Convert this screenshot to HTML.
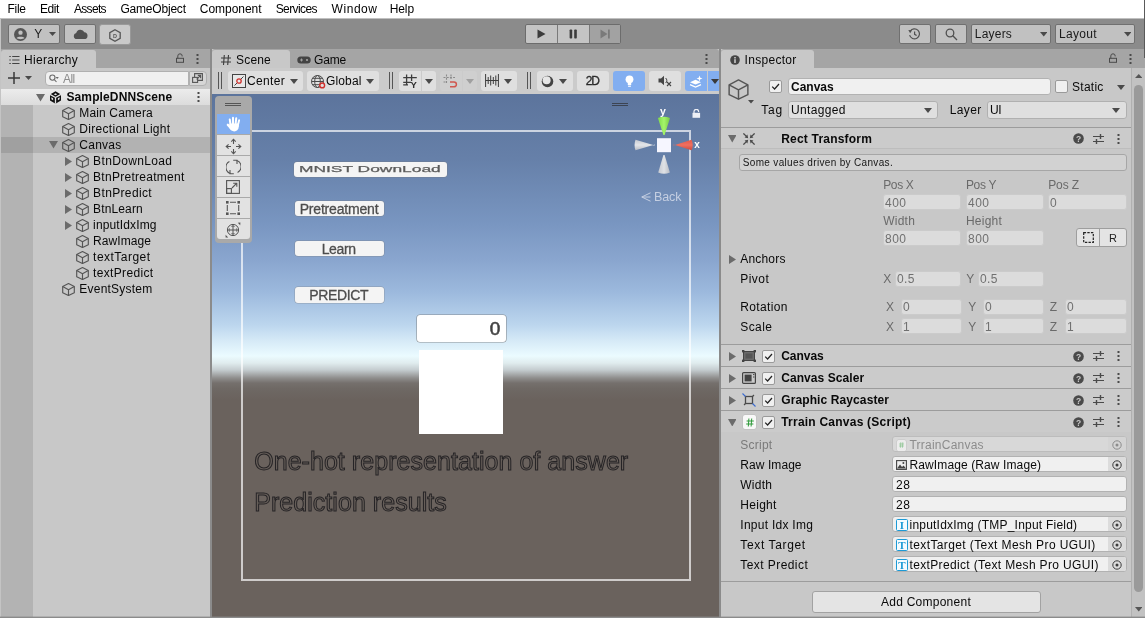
<!DOCTYPE html>
<html><head><meta charset="utf-8"><title>Unity</title>
<style>
*{box-sizing:border-box;margin:0;padding:0}
html,body{width:1145px;height:618px;overflow:hidden;background:#8b8b8b;font-family:"Liberation Sans",sans-serif;font-size:12px;color:#090909}
.b{position:absolute;display:block}
.t{position:absolute;white-space:pre;line-height:16px;height:16px}
</style></head>
<body>
<div class="b" style="left:0;top:0;width:1145px;height:618px;overflow:hidden;will-change:transform">
<div class="b" style="left:0px;top:0px;width:1145px;height:18px;background:#ffffff;"></div>
<span class="t" style="left:7.5px;top:1.0px;font-size:12px;color:#000;letter-spacing:-0.27px;">File</span>
<span class="t" style="left:39.9px;top:1.0px;font-size:12px;color:#000;letter-spacing:-0.37px;">Edit</span>
<span class="t" style="left:74.0px;top:1.0px;font-size:12px;color:#000;letter-spacing:-0.69px;">Assets</span>
<span class="t" style="left:120.5px;top:1.0px;font-size:12px;color:#000;letter-spacing:-0.21px;">GameObject</span>
<span class="t" style="left:199.8px;top:1.0px;font-size:12px;color:#000;letter-spacing:-0.04px;">Component</span>
<span class="t" style="left:275.7px;top:1.0px;font-size:12px;color:#000;letter-spacing:-0.60px;">Services</span>
<span class="t" style="left:331.5px;top:1.0px;font-size:12px;color:#000;letter-spacing:0.57px;">Window</span>
<span class="t" style="left:389.8px;top:1.0px;font-size:12px;color:#000;letter-spacing:-0.14px;">Help</span>
<div class="b" style="left:0px;top:18px;width:1145px;height:31px;background:#8b8b8b;"></div>
<div class="b" style="left:0px;top:18px;width:1145px;height:1px;background:#c0c0c0;"></div>
<div class="b" style="left:8px;top:24px;width:52px;height:20px;background:#c1c1c1;border:1px solid #707070;border-radius:2px;"></div>
<svg class="b" style="left:13.5px;top:27.5px;" width="13" height="13" viewBox="0 0 12 12"><circle cx="6" cy="6" r="6" fill="#555"/><circle cx="6" cy="4.3" r="2" fill="#c1c1c1"/><path d="M2.3 9.3 C3.3 7.6 8.7 7.6 9.7 9.3 C8.6 10.6 3.4 10.6 2.3 9.3 Z" fill="#c1c1c1"/></svg>
<span class="t" style="left:34.3px;top:26.0px;font-size:12px;color:#1a1a1a;letter-spacing:0.58px;">Y</span>
<svg class="b" style="left:48.7px;top:32px;" width="7" height="4" viewBox="0 0 7 4"><path d="M0 0 L7 0 L3.5 4 Z" fill="#4a4a4a"/></svg>
<div class="b" style="left:64px;top:24px;width:32px;height:20px;background:#c1c1c1;border:1px solid #707070;border-radius:2px;"></div>
<svg class="b" style="left:72.5px;top:28.7px;" width="15" height="10.7" viewBox="0 0 14 10"><path d="M3.4 9.6 a3 3 0 0 1 -0.4 -5.9 a4 4 0 0 1 7.6 -0.6 a3.3 3.3 0 0 1 0.4 6.5 Z" fill="#505050"/></svg>
<div class="b" style="left:99px;top:24px;width:32px;height:21px;background:#c9c9c9;border:1px solid #999;border-radius:3px;"></div>
<svg class="b" style="left:109px;top:28.5px;" width="12" height="13" viewBox="0 0 12 13"><path d="M6 0.8 L11.2 3.7 V9.3 L6 12.2 L0.8 9.3 V3.7 Z" fill="none" stroke="#555" stroke-width="1.3"/><text x="6" y="8.6" font-size="5.5" font-family="Liberation Sans, sans-serif" fill="#555" text-anchor="middle" font-weight="bold">D</text></svg>
<div class="b" style="left:525px;top:24px;width:96px;height:20px;background:#c4c4c4;border:1px solid #6c6c6c;border-radius:2px;"></div>
<div class="b" style="left:589.5px;top:25px;width:30.5px;height:18px;background:#a2a2a2;"></div>
<div class="b" style="left:557px;top:25px;width:1px;height:18px;background:#7a7a7a;"></div>
<div class="b" style="left:589px;top:25px;width:1px;height:18px;background:#7a7a7a;"></div>
<svg class="b" style="left:537px;top:29px;" width="9" height="10" viewBox="0 0 9 10"><path d="M0.5 0.5 L8.5 5 L0.5 9.5 Z" fill="#3c3c3c"/></svg>
<svg class="b" style="left:569px;top:29px;" width="9" height="10" viewBox="0 0 9 10"><rect x="0.6" y="0.5" width="2.6" height="9" rx="0.8" fill="#3c3c3c"/><rect x="5.2" y="0.5" width="2.6" height="9" rx="0.8" fill="#3c3c3c"/></svg>
<svg class="b" style="left:600px;top:29px;" width="11" height="10" viewBox="0 0 11 10"><path d="M0.5 0.5 L7.5 5 L0.5 9.5 Z" fill="#7a7a7a"/><rect x="8" y="0.5" width="1.8" height="9" fill="#7a7a7a"/></svg>
<div class="b" style="left:899px;top:24px;width:32px;height:20px;background:#c1c1c1;border:1px solid #707070;border-radius:2px;"></div>
<svg class="b" style="left:908px;top:28px;" width="13" height="12" viewBox="0 0 13 12"><g fill="none" stroke="#505050" stroke-width="1.2"><path d="M2.2 3.2 A5 5 0 1 1 1.6 7.2"/><path d="M6.6 3.4 V6.3 L8.6 7.6"/></g><path d="M0.3 2 L4 2.2 L2.2 5.2 Z" fill="#505050"/></svg>
<div class="b" style="left:935px;top:24px;width:32px;height:20px;background:#c1c1c1;border:1px solid #707070;border-radius:2px;"></div>
<svg class="b" style="left:945px;top:28px;" width="13" height="13" viewBox="0 0 13 13"><g fill="none" stroke="#505050" stroke-width="1.3"><circle cx="5" cy="5" r="3.8"/><path d="M7.8 7.8 L12 12"/></g></svg>
<div class="b" style="left:971px;top:24px;width:80px;height:20px;background:#c1c1c1;border:1px solid #707070;border-radius:2px;"></div>
<span class="t" style="left:974.8px;top:26.0px;font-size:12px;color:#1a1a1a;letter-spacing:0.21px;">Layers</span>
<svg class="b" style="left:1039.5px;top:32px;" width="7.5" height="4.5" viewBox="0 0 7.5 4.5"><path d="M0 0 L7.5 0 L3.75 4.5 Z" fill="#4a4a4a"/></svg>
<div class="b" style="left:1055px;top:24px;width:80px;height:20px;background:#c1c1c1;border:1px solid #707070;border-radius:2px;"></div>
<span class="t" style="left:1059.1px;top:26.0px;font-size:12px;color:#1a1a1a;letter-spacing:0.29px;">Layout</span>
<svg class="b" style="left:1123.5px;top:32px;" width="7.5" height="4.5" viewBox="0 0 7.5 4.5"><path d="M0 0 L7.5 0 L3.75 4.5 Z" fill="#4a4a4a"/></svg>
<div class="b" style="left:1px;top:49px;width:209px;height:568px;background:#c8c8c8;"></div>
<div class="b" style="left:1px;top:49px;width:209px;height:19px;background:#a5a5a5;"></div>
<div class="b" style="left:1px;top:50px;width:95px;height:18px;background:#c8c8c8;border-radius:3px 3px 0 0;"></div>
<svg class="b" style="left:9px;top:55px;" width="11" height="10" viewBox="0 0 11 10"><g stroke="#444" stroke-width="1.1" fill="none"><path d="M3.2 1.5 H10.5 M3.2 5 H10.5 M3.2 8.5 H10.5"/><path d="M0.3 1.5 H1.8 M0.3 5 H1.8 M0.3 8.5 H1.8"/></g></svg>
<span class="t" style="left:24.0px;top:52.0px;font-size:12px;color:#090909;letter-spacing:0.31px;">Hierarchy</span>
<svg class="b" style="left:176px;top:53px;" width="8" height="10" viewBox="0 0 8 10"><g fill="none" stroke="#4a4a4a" stroke-width="1"><rect x="0.5" y="5.3" width="7" height="4"/><path d="M1.8 5.3 V3 a2.2 2.2 0 0 1 4.4 0 V3.4"/></g></svg>
<svg class="b" style="left:196.0px;top:53.5px;" width="3" height="11" viewBox="0 0 3 11"><g fill="#4a4a4a"><rect x="0.5" y="0" width="2" height="2"/><rect x="0.5" y="4" width="2" height="2"/><rect x="0.5" y="8" width="2" height="2"/></g></svg>
<svg class="b" style="left:8px;top:72px;" width="12" height="12" viewBox="0 0 12 12"><path d="M6 0 V12 M0 6 H12" stroke="#3a3a3a" stroke-width="1.5" fill="none"/></svg>
<svg class="b" style="left:25px;top:76px;" width="7" height="4" viewBox="0 0 7 4"><path d="M0 0 L7 0 L3.5 4 Z" fill="#4a4a4a"/></svg>
<div class="b" style="left:45px;top:70.5px;width:144px;height:15.0px;background:#f0f0f0;border:1px solid #b0b0b0;border-radius:4px 0 0 4px;"></div>
<svg class="b" style="left:49px;top:73.5px;" width="10" height="9" viewBox="0 0 10 9"><g fill="none" stroke="#6a6a6a" stroke-width="1.1"><circle cx="3.4" cy="3.6" r="2.6"/><path d="M5.3 5.6 L7.5 8"/></g><path d="M6.6 3 h3.2 l-1.6 2 Z" fill="#6a6a6a"/></svg>
<span class="t" style="left:63.0px;top:70.5px;font-size:12px;color:#8c8c8c;letter-spacing:-0.58px;">All</span>
<div class="b" style="left:188.5px;top:70.5px;width:18.5px;height:15.0px;background:#d6d6d6;border:1px solid #b0b0b0;border-radius:0 4px 4px 0;"></div>
<svg class="b" style="left:192px;top:73px;" width="11" height="10" viewBox="0 0 11 10"><g fill="none" stroke="#555" stroke-width="1.1"><rect x="0.6" y="4.4" width="5" height="5"/><path d="M2.6 4 V0.6 H10.4 V7.4 H6"/><path d="M4.6 6.4 L8.6 2.4 M5.8 2.4 H8.6 V5.2"/></g></svg>
<div class="b" style="left:1px;top:105px;width:32px;height:512px;background:#b3b3b3;"></div>
<div class="b" style="left:1px;top:89px;width:209px;height:16px;background:#e4e4e4;background:linear-gradient(#ececec,#dcdcdc);"></div>
<div class="b" style="left:1px;top:137px;width:209px;height:16px;background:#b2b2b2;"></div>
<div class="b" style="left:1px;top:137px;width:32px;height:16px;background:#a0a0a0;"></div>
<svg class="b" style="left:35.5px;top:94px;" width="9" height="7.5" viewBox="0 0 9 7.5"><path d="M0 0 L9 0 L4.5 7.5 Z" fill="#6b6b6b"/></svg>
<svg class="b" style="left:49px;top:90.5px;" width="13" height="13" viewBox="0 0 13 13"><g fill="#111"><path d="M6.5 0.3 L12 3.4 L12 9.6 L6.5 12.7 L1 9.6 L1 3.4 Z"/></g><g stroke="#e4e4e4" stroke-width="1.3" fill="none"><path d="M6.5 6.5 L6.5 12.7 M6.5 6.5 L1 3.4 M6.5 6.5 L12 3.4"/></g><g fill="#e4e4e4"><path d="M6.5 2.2 L8.2 3.2 L6.5 4.2 L4.8 3.2 Z"/><path d="M2.4 6.3 L4.1 7.3 L4.1 9.3 L2.4 8.3 Z"/><path d="M10.6 6.3 L8.9 7.3 L8.9 9.3 L10.6 8.3 Z"/></g></svg>
<span class="t" style="left:66.4px;top:89.0px;font-size:12px;color:#090909;letter-spacing:0.13px;font-weight:bold;">SampleDNNScene</span>
<svg class="b" style="left:196.5px;top:91.5px;" width="3" height="11" viewBox="0 0 3 11"><g fill="#4a4a4a"><rect x="0.5" y="0" width="2" height="2"/><rect x="0.5" y="4" width="2" height="2"/><rect x="0.5" y="8" width="2" height="2"/></g></svg>
<svg class="b" style="left:62px;top:106.5px;" width="13" height="13" viewBox="0 0 13 13"><g fill="none" stroke="#555555" stroke-width="1.15" stroke-linejoin="round"><path d="M6.5 0.6 L12.3 3.6 L12.3 9.7 L6.5 12.5 L0.7 9.7 L0.7 3.6 Z"/><path d="M0.7 3.6 L6.5 6.7 L12.3 3.6 M6.5 6.7 L6.5 12.5"/></g></svg>
<span class="t" style="left:79.3px;top:105.0px;font-size:12px;color:#090909;letter-spacing:0.14px;">Main Camera</span>
<svg class="b" style="left:62px;top:122.5px;" width="13" height="13" viewBox="0 0 13 13"><g fill="none" stroke="#555555" stroke-width="1.15" stroke-linejoin="round"><path d="M6.5 0.6 L12.3 3.6 L12.3 9.7 L6.5 12.5 L0.7 9.7 L0.7 3.6 Z"/><path d="M0.7 3.6 L6.5 6.7 L12.3 3.6 M6.5 6.7 L6.5 12.5"/></g></svg>
<span class="t" style="left:79.3px;top:121.0px;font-size:12px;color:#090909;letter-spacing:0.30px;">Directional Light</span>
<svg class="b" style="left:49px;top:141px;" width="9" height="7.5" viewBox="0 0 9 7.5"><path d="M0 0 L9 0 L4.5 7.5 Z" fill="#6b6b6b"/></svg>
<svg class="b" style="left:62px;top:138.5px;" width="13" height="13" viewBox="0 0 13 13"><g fill="none" stroke="#555555" stroke-width="1.15" stroke-linejoin="round"><path d="M6.5 0.6 L12.3 3.6 L12.3 9.7 L6.5 12.5 L0.7 9.7 L0.7 3.6 Z"/><path d="M0.7 3.6 L6.5 6.7 L12.3 3.6 M6.5 6.7 L6.5 12.5"/></g></svg>
<span class="t" style="left:79.3px;top:137.0px;font-size:12px;color:#090909;letter-spacing:0.26px;">Canvas</span>
<svg class="b" style="left:64.5px;top:156.5px;" width="7" height="9" viewBox="0 0 7 9"><path d="M0 0 L7 4.5 L0 9 Z" fill="#6b6b6b"/></svg>
<svg class="b" style="left:76px;top:154.5px;" width="13" height="13" viewBox="0 0 13 13"><g fill="none" stroke="#555555" stroke-width="1.15" stroke-linejoin="round"><path d="M6.5 0.6 L12.3 3.6 L12.3 9.7 L6.5 12.5 L0.7 9.7 L0.7 3.6 Z"/><path d="M0.7 3.6 L6.5 6.7 L12.3 3.6 M6.5 6.7 L6.5 12.5"/></g></svg>
<span class="t" style="left:93.1px;top:153.0px;font-size:12px;color:#090909;letter-spacing:0.35px;">BtnDownLoad</span>
<svg class="b" style="left:64.5px;top:172.5px;" width="7" height="9" viewBox="0 0 7 9"><path d="M0 0 L7 4.5 L0 9 Z" fill="#6b6b6b"/></svg>
<svg class="b" style="left:76px;top:170.5px;" width="13" height="13" viewBox="0 0 13 13"><g fill="none" stroke="#555555" stroke-width="1.15" stroke-linejoin="round"><path d="M6.5 0.6 L12.3 3.6 L12.3 9.7 L6.5 12.5 L0.7 9.7 L0.7 3.6 Z"/><path d="M0.7 3.6 L6.5 6.7 L12.3 3.6 M6.5 6.7 L6.5 12.5"/></g></svg>
<span class="t" style="left:93.1px;top:169.0px;font-size:12px;color:#090909;letter-spacing:0.27px;">BtnPretreatment</span>
<svg class="b" style="left:64.5px;top:188.5px;" width="7" height="9" viewBox="0 0 7 9"><path d="M0 0 L7 4.5 L0 9 Z" fill="#6b6b6b"/></svg>
<svg class="b" style="left:76px;top:186.5px;" width="13" height="13" viewBox="0 0 13 13"><g fill="none" stroke="#555555" stroke-width="1.15" stroke-linejoin="round"><path d="M6.5 0.6 L12.3 3.6 L12.3 9.7 L6.5 12.5 L0.7 9.7 L0.7 3.6 Z"/><path d="M0.7 3.6 L6.5 6.7 L12.3 3.6 M6.5 6.7 L6.5 12.5"/></g></svg>
<span class="t" style="left:93.1px;top:185.0px;font-size:12px;color:#090909;letter-spacing:0.35px;">BtnPredict</span>
<svg class="b" style="left:64.5px;top:204.5px;" width="7" height="9" viewBox="0 0 7 9"><path d="M0 0 L7 4.5 L0 9 Z" fill="#6b6b6b"/></svg>
<svg class="b" style="left:76px;top:202.5px;" width="13" height="13" viewBox="0 0 13 13"><g fill="none" stroke="#555555" stroke-width="1.15" stroke-linejoin="round"><path d="M6.5 0.6 L12.3 3.6 L12.3 9.7 L6.5 12.5 L0.7 9.7 L0.7 3.6 Z"/><path d="M0.7 3.6 L6.5 6.7 L12.3 3.6 M6.5 6.7 L6.5 12.5"/></g></svg>
<span class="t" style="left:93.1px;top:201.0px;font-size:12px;color:#090909;letter-spacing:0.13px;">BtnLearn</span>
<svg class="b" style="left:64.5px;top:220.5px;" width="7" height="9" viewBox="0 0 7 9"><path d="M0 0 L7 4.5 L0 9 Z" fill="#6b6b6b"/></svg>
<svg class="b" style="left:76px;top:218.5px;" width="13" height="13" viewBox="0 0 13 13"><g fill="none" stroke="#555555" stroke-width="1.15" stroke-linejoin="round"><path d="M6.5 0.6 L12.3 3.6 L12.3 9.7 L6.5 12.5 L0.7 9.7 L0.7 3.6 Z"/><path d="M0.7 3.6 L6.5 6.7 L12.3 3.6 M6.5 6.7 L6.5 12.5"/></g></svg>
<span class="t" style="left:93.1px;top:217.0px;font-size:12px;color:#090909;letter-spacing:0.13px;">inputIdxImg</span>
<svg class="b" style="left:76px;top:234.5px;" width="13" height="13" viewBox="0 0 13 13"><g fill="none" stroke="#555555" stroke-width="1.15" stroke-linejoin="round"><path d="M6.5 0.6 L12.3 3.6 L12.3 9.7 L6.5 12.5 L0.7 9.7 L0.7 3.6 Z"/><path d="M0.7 3.6 L6.5 6.7 L12.3 3.6 M6.5 6.7 L6.5 12.5"/></g></svg>
<span class="t" style="left:93.1px;top:233.0px;font-size:12px;color:#090909;letter-spacing:0.07px;">RawImage</span>
<svg class="b" style="left:76px;top:250.5px;" width="13" height="13" viewBox="0 0 13 13"><g fill="none" stroke="#555555" stroke-width="1.15" stroke-linejoin="round"><path d="M6.5 0.6 L12.3 3.6 L12.3 9.7 L6.5 12.5 L0.7 9.7 L0.7 3.6 Z"/><path d="M0.7 3.6 L6.5 6.7 L12.3 3.6 M6.5 6.7 L6.5 12.5"/></g></svg>
<span class="t" style="left:93.1px;top:249.0px;font-size:12px;color:#090909;letter-spacing:0.48px;">textTarget</span>
<svg class="b" style="left:76px;top:266.5px;" width="13" height="13" viewBox="0 0 13 13"><g fill="none" stroke="#555555" stroke-width="1.15" stroke-linejoin="round"><path d="M6.5 0.6 L12.3 3.6 L12.3 9.7 L6.5 12.5 L0.7 9.7 L0.7 3.6 Z"/><path d="M0.7 3.6 L6.5 6.7 L12.3 3.6 M6.5 6.7 L6.5 12.5"/></g></svg>
<span class="t" style="left:93.1px;top:265.0px;font-size:12px;color:#090909;letter-spacing:0.33px;">textPredict</span>
<svg class="b" style="left:62px;top:282.5px;" width="13" height="13" viewBox="0 0 13 13"><g fill="none" stroke="#555555" stroke-width="1.15" stroke-linejoin="round"><path d="M6.5 0.6 L12.3 3.6 L12.3 9.7 L6.5 12.5 L0.7 9.7 L0.7 3.6 Z"/><path d="M0.7 3.6 L6.5 6.7 L12.3 3.6 M6.5 6.7 L6.5 12.5"/></g></svg>
<span class="t" style="left:79.3px;top:281.0px;font-size:12px;color:#090909;letter-spacing:0.22px;">EventSystem</span>
<div class="b" style="left:212px;top:49px;width:507px;height:568px;background:#c8c8c8;"></div>
<div class="b" style="left:212px;top:49px;width:507px;height:19px;background:#a5a5a5;border-radius:3px 3px 0 0;"></div>
<div class="b" style="left:212px;top:50px;width:77.5px;height:18px;background:#c8c8c8;border-radius:3px 3px 0 0;"></div>
<svg class="b" style="left:221px;top:54.5px;" width="10" height="10" viewBox="0 0 10 10"><path d="M3.3 0 L2.5 10 M7.5 0 L6.7 10 M0 3 H10 M0 7 H10" stroke="#3c3c3c" stroke-width="1.1" fill="none"/></svg>
<span class="t" style="left:236.1px;top:52.0px;font-size:12px;color:#090909;letter-spacing:0.15px;">Scene</span>
<svg class="b" style="left:297px;top:55.5px;" width="14" height="8" viewBox="0 0 14 8"><rect x="0.3" y="0.5" width="13.4" height="7" rx="3.5" fill="#444"/><circle cx="10" cy="4" r="1.1" fill="#a5a5a5"/><path d="M3 4 H6 M4.5 2.5 V5.5" stroke="#a5a5a5" stroke-width="0.9"/></svg>
<span class="t" style="left:314.0px;top:52.0px;font-size:12px;color:#090909;letter-spacing:-0.14px;">Game</span>
<svg class="b" style="left:705.0px;top:53.5px;" width="3" height="11" viewBox="0 0 3 11"><g fill="#4a4a4a"><rect x="0.5" y="0" width="2" height="2"/><rect x="0.5" y="4" width="2" height="2"/><rect x="0.5" y="8" width="2" height="2"/></g></svg>
<div class="b" style="left:212px;top:68px;width:507px;height:25.5px;background:#cbcbcb;"></div>
<div class="b" style="left:218px;top:72px;width:1px;height:17px;background:#555;"></div>
<div class="b" style="left:221px;top:72px;width:1px;height:17px;background:#555;"></div>
<div class="b" style="left:228px;top:71px;width:74.5px;height:19.5px;background:#dfdfdf;border-radius:3px;"></div>
<svg class="b" style="left:232px;top:74px;" width="14" height="14" viewBox="0 0 14 14"><rect x="0.5" y="0.5" width="13" height="13" fill="#e8e8e8" stroke="#444" stroke-width="1"/><path d="M2.5 11.5 L11.5 2.5" stroke="#444" stroke-width="1"/><circle cx="7" cy="7" r="2.2" fill="#e8e8e8" stroke="#d0302c" stroke-width="1.3"/></svg>
<span class="t" style="left:247.0px;top:73.0px;font-size:12px;color:#090909;letter-spacing:0.36px;">Center</span>
<svg class="b" style="left:289.5px;top:79px;" width="8" height="5" viewBox="0 0 8 5"><path d="M0 0 L8 0 L4.0 5 Z" fill="#4a4a4a"/></svg>
<div class="b" style="left:307px;top:71px;width:72px;height:19.5px;background:#dfdfdf;border-radius:3px;"></div>
<svg class="b" style="left:311px;top:74.5px;" width="15" height="14" viewBox="0 0 15 14"><g fill="none" stroke="#4a4a4a" stroke-width="1"><circle cx="6.5" cy="6.5" r="6"/><ellipse cx="6.5" cy="6.5" rx="2.8" ry="6"/><path d="M0.5 6.5 H12.5 M1.4 3.3 H11.6 M1.4 9.7 H11.6"/></g><circle cx="11.2" cy="10.4" r="2.4" fill="#dfdfdf" stroke="#d0302c" stroke-width="1.4"/></svg>
<span class="t" style="left:326.0px;top:73.0px;font-size:12px;color:#090909;letter-spacing:0.15px;">Global</span>
<svg class="b" style="left:365.5px;top:79px;" width="8" height="5" viewBox="0 0 8 5"><path d="M0 0 L8 0 L4.0 5 Z" fill="#4a4a4a"/></svg>
<div class="b" style="left:389px;top:72px;width:1px;height:17px;background:#555;"></div>
<div class="b" style="left:392px;top:72px;width:1px;height:17px;background:#555;"></div>
<div class="b" style="left:399px;top:71px;width:22px;height:19.5px;background:#dfdfdf;border-radius:3px 0 0 3px;"></div>
<div class="b" style="left:422px;top:71px;width:14px;height:19.5px;background:#dfdfdf;border-radius:0 3px 3px 0;"></div>
<svg class="b" style="left:403px;top:74px;" width="15" height="14" viewBox="0 0 15 14"><path d="M3.6 0.4 V11.6 M8.6 0.4 V7 M0.2 3.6 H13.8 M0.2 8.4 H8 M0.2 10.8 H5" stroke="#3c3c3c" stroke-width="1.3" fill="none"/><text x="10.6" y="13.8" font-size="9.5" font-weight="bold" text-anchor="middle" fill="#2e2e2e" font-family="Liberation Sans, sans-serif">Y</text></svg>
<svg class="b" style="left:425px;top:79px;" width="8" height="5" viewBox="0 0 8 5"><path d="M0 0 L8 0 L4.0 5 Z" fill="#4a4a4a"/></svg>
<div class="b" style="left:440px;top:71px;width:22px;height:19.5px;background:#cfcfcf;border-radius:3px 0 0 3px;"></div>
<div class="b" style="left:462.5px;top:71px;width:14.0px;height:19.5px;background:#cfcfcf;border-radius:0 3px 3px 0;"></div>
<svg class="b" style="left:443px;top:74px;" width="16" height="14" viewBox="0 0 16 14"><path d="M3.5 0.5 V9 M8 0.5 V5 M0.5 3.5 H12 M0.5 8 H4" stroke="#8a8a8a" stroke-width="1.1" stroke-dasharray="2 1.2" fill="none"/><path d="M7 8 H11 a2.4 2.4 0 0 1 0 4.8 H7" stroke="#d0574f" stroke-width="1.5" fill="none"/></svg>
<svg class="b" style="left:465.5px;top:79px;" width="8" height="5" viewBox="0 0 8 5"><path d="M0 0 L8 0 L4.0 5 Z" fill="#a0a0a0"/></svg>
<div class="b" style="left:481px;top:71px;width:36px;height:19.5px;background:#dfdfdf;border-radius:3px;"></div>
<svg class="b" style="left:485px;top:74px;" width="14" height="13" viewBox="0 0 14 13"><path d="M0.6 0 V13 M13.4 0 V13 M3.2 3 V10 M5.7 1.5 V11.5 M8.3 3 V10 M10.8 1.5 V11.5 M0.6 6.5 H13.4" stroke="#3c3c3c" stroke-width="1" fill="none"/></svg>
<svg class="b" style="left:503.5px;top:79px;" width="8" height="5" viewBox="0 0 8 5"><path d="M0 0 L8 0 L4.0 5 Z" fill="#4a4a4a"/></svg>
<div class="b" style="left:526.5px;top:72px;width:1.0px;height:17px;background:#555;"></div>
<div class="b" style="left:529.5px;top:72px;width:1.0px;height:17px;background:#555;"></div>
<div class="b" style="left:537px;top:71px;width:36px;height:19.5px;background:#dfdfdf;border-radius:3px;"></div>
<svg class="b" style="left:541px;top:74.5px;" width="13" height="13" viewBox="0 0 13 13"><circle cx="6.5" cy="6.5" r="5.8" fill="#444"/><circle cx="5.6" cy="5.2" r="4" fill="#e6e6e6"/></svg>
<svg class="b" style="left:558.5px;top:79px;" width="8" height="5" viewBox="0 0 8 5"><path d="M0 0 L8 0 L4.0 5 Z" fill="#4a4a4a"/></svg>
<div class="b" style="left:577px;top:71px;width:32px;height:19.5px;background:#dfdfdf;border-radius:3px;"></div>
<span class="t" style="left:585.8px;top:73.0px;font-size:12px;color:#2a2a2a;letter-spacing:-1.10px;-webkit-text-stroke:0.3px #2a2a2a;">2D</span>
<div class="b" style="left:613px;top:71px;width:32px;height:19.5px;background:#82aef0;border-radius:3px;"></div>
<svg class="b" style="left:624.5px;top:75px;" width="9" height="13" viewBox="0 0 9 13"><circle cx="4.5" cy="4.3" r="3.9" fill="#fff"/><rect x="2.8" y="7.6" width="3.4" height="2.4" fill="#fff"/><rect x="3.1" y="10.6" width="2.8" height="1.2" fill="#fff"/></svg>
<div class="b" style="left:649px;top:71px;width:32px;height:19.5px;background:#dfdfdf;border-radius:3px;"></div>
<svg class="b" style="left:658px;top:75px;" width="15" height="12" viewBox="0 0 15 12"><path d="M0.5 3.5 H3 L6 0.8 V10.2 L3 7.5 H0.5 Z" fill="#444"/><path d="M7.6 3 a3.2 3.2 0 0 1 0 5" stroke="#444" stroke-width="1" fill="none"/><path d="M9 7 L13 11 M13 7 L9 11" stroke="#444" stroke-width="1.1"/></svg>
<div class="b" style="left:685px;top:71px;width:22px;height:19.5px;background:#82aef0;border-radius:3px 0 0 3px;"></div>
<div class="b" style="left:707.5px;top:71px;width:11.5px;height:19.5px;background:#82aef0;"></div>
<svg class="b" style="left:689px;top:74.5px;" width="15" height="13" viewBox="0 0 15 13"><path d="M1 7.2 L6.5 4.8 L12 7.2 L6.5 9.6 Z" fill="#fff"/><path d="M1 9.6 L6.5 12 L12 9.6" stroke="#fff" stroke-width="1.2" fill="none"/><path d="M10.5 0.5 L11.3 2.7 L13.5 3.5 L11.3 4.3 L10.5 6.5 L9.7 4.3 L7.5 3.5 L9.7 2.7 Z" fill="#fff"/></svg>
<svg class="b" style="left:710.5px;top:79px;" width="8" height="5" viewBox="0 0 8 5"><path d="M0 0 L8 0 L4.0 5 Z" fill="#3a3a3a"/></svg>
<div class="b" id="sv" style="left:212px;top:93.5px;width:507px;height:523.0px;background:linear-gradient(to bottom,#5c749c 0px,#6680a9 65px,#7996c1 130px,#8aa6cf 167px,#9cb9dd 198px,#bcd6ee 231px,#d6eaf7 247px,#ebfbff 262px,#e0ecee 269px,#c4cccf 276px,#8f8e8d 284px,#75706d 289px,#6e6864 295px,#6a625d 306px,#6a625d 100%);overflow:hidden">
<div class="b" style="left:28.5px;top:36.30000000000001px;width:450.79999999999995px;height:450.90000000000003px;border:2px solid rgba(255,255,255,0.68);"></div>
<div class="b" style="left:81.5px;top:68.0px;width:153.5px;height:15.0px;background:#f4f4f4;border-radius:3px;box-shadow:0 0 0 0.5px rgba(120,120,120,.5);"></div>
<span class="t" style="left:87.39999999999998px;top:67.80000000000001px;font-size:9.5px;color:#5c5c5c;-webkit-text-stroke:0.25px #5c5c5c;transform-origin:0 50%;transform:scaleX(1.83);letter-spacing:0px">MNIST DownLoad</span>
<div class="b" style="left:83px;top:107.5px;width:88.5px;height:15.0px;background:#f4f4f4;border-radius:3px;box-shadow:0 0 0 0.5px rgba(120,120,120,.5);"></div>
<span class="t" style="left:87.7px;top:107.0px;font-size:14px;color:#4d4d4d;letter-spacing:-0.19px;-webkit-text-stroke:0.3px #4d4d4d;">Pretreatment</span>
<div class="b" style="left:83px;top:147.0px;width:88.5px;height:15.5px;background:#f4f4f4;border-radius:3px;box-shadow:0 0 0 0.5px rgba(120,120,120,.5);"></div>
<span class="t" style="left:109.7px;top:147.0px;font-size:14px;color:#4d4d4d;letter-spacing:-0.36px;-webkit-text-stroke:0.3px #4d4d4d;">Learn</span>
<div class="b" style="left:83px;top:193.5px;width:88.5px;height:15.5px;background:#f4f4f4;border-radius:3px;box-shadow:0 0 0 0.5px rgba(120,120,120,.5);"></div>
<span class="t" style="left:97.3px;top:193.5px;font-size:14px;color:#4d4d4d;letter-spacing:-0.38px;-webkit-text-stroke:0.3px #4d4d4d;">PREDICT</span>
<div class="b" style="left:205px;top:221.0px;width:88.5px;height:27.0px;background:#ffffff;border-radius:3px;box-shadow:0 0 0 0.6px rgba(110,110,110,.7);"></div>
<span class="t" style="left:277.8px;top:227.0px;font-size:19px;color:#404040;letter-spacing:-0.08px;-webkit-text-stroke:0.55px #404040;">0</span>
<div class="b" style="left:207px;top:256.5px;width:84px;height:84.0px;background:#ffffff;"></div>
<span class="t" style="left:42.19999999999999px;top:352.6px;font-size:25px;line-height:30px;height:30px;color:#665e59;-webkit-text-stroke:1px #262426;letter-spacing:0.05px">One-hot representation of answer</span>
<span class="t" style="left:42.19999999999999px;top:393.6px;font-size:25px;line-height:30px;height:30px;color:#665e59;-webkit-text-stroke:1px #262426;letter-spacing:0.05px">Prediction results</span>
<div class="b" style="left:2.5px;top:2.5px;width:37.5px;height:147.0px;background:#a9a9a9;border-radius:4px;"></div>
<div class="b" style="left:13px;top:9.0px;width:16px;height:1.0px;background:#555;"></div>
<div class="b" style="left:13px;top:11.5px;width:16px;height:1.0px;background:#555;"></div>
<div class="b" style="left:5px;top:20.5px;width:32.5px;height:20.0px;background:#82aef0;"></div>
<div class="b" style="left:5px;top:41.5px;width:32.5px;height:20.0px;background:#e2e2e2;"></div>
<div class="b" style="left:5px;top:62.5px;width:32.5px;height:20.0px;background:#e2e2e2;"></div>
<div class="b" style="left:5px;top:83.5px;width:32.5px;height:20.0px;background:#e2e2e2;"></div>
<div class="b" style="left:5px;top:104.5px;width:32.5px;height:20.0px;background:#e2e2e2;"></div>
<div class="b" style="left:5px;top:125.5px;width:32.5px;height:20.0px;background:#e2e2e2;border-radius:0 0 3px 3px;"></div>
<svg class="b" style="left:13.5px;top:22.0px;" width="16" height="16" viewBox="0 0 16 16"><g fill="#fff"><rect x="3.4" y="2.4" width="2" height="8" rx="1" transform="rotate(-8 4.4 8)"/><rect x="6" y="0.8" width="2" height="8.5" rx="1"/><rect x="8.6" y="1.2" width="2" height="8.5" rx="1" transform="rotate(6 9.6 8)"/><rect x="11" y="3.2" width="1.9" height="7.5" rx="0.95" transform="rotate(14 12 9)"/><path d="M3.4 7.4 H12.8 V10.6 C12.8 13.6 10.8 15.4 8.2 15.4 C6 15.4 4.6 14.4 3.6 12.6 Z"/><path d="M4.6 13.4 L0.9 9.4 a1.05 1.05 0 0 1 1.7 -1.3 L5.2 10.4 Z"/></g></svg>
<svg class="b" style="left:13px;top:44.0px;" width="17" height="17" viewBox="0 0 17 17"><g fill="none" stroke="#555" stroke-width="1.1"><path d="M8.5 1.5 V6 M8.5 11 V15.5 M1.5 8.5 H6 M11 8.5 H15.5"/><path d="M6.3 3.6 L8.5 1.2 L10.7 3.6 M6.3 13.4 L8.5 15.8 L10.7 13.4 M3.6 6.3 L1.2 8.5 L3.6 10.7 M13.4 6.3 L15.8 8.5 L13.4 10.7"/></g></svg>
<svg class="b" style="left:14px;top:65.0px;" width="15" height="16" viewBox="0 0 15 16"><g fill="none" stroke="#555" stroke-width="1.1"><path d="M10.6 1.6 A6.4 6.4 0 0 1 11.6 13.4"/><path d="M4.4 14.4 A6.4 6.4 0 0 1 3.4 2.6"/><path d="M7.2 1.2 H11 V5"/><path d="M7.8 14.8 H4 V11"/></g></svg>
<svg class="b" style="left:14px;top:86.5px;" width="14" height="14" viewBox="0 0 14 14"><g fill="none" stroke="#555" stroke-width="1.1"><rect x="0.6" y="0.6" width="12.8" height="12.8"/><rect x="0.6" y="8.6" width="4.8" height="4.8"/><path d="M6 8 L10.8 3.2 M7.2 3.2 H10.8 V6.8"/></g></svg>
<svg class="b" style="left:14px;top:107.0px;" width="14" height="14" viewBox="0 0 14 14"><g fill="#555"><rect x="0" y="0" width="2.6" height="2.6"/><rect x="11.4" y="0" width="2.6" height="2.6"/><rect x="0" y="11.4" width="2.6" height="2.6"/><rect x="11.4" y="11.4" width="2.6" height="2.6"/></g><path d="M4 1.3 H10 M4 12.7 H10 M1.3 4 V10 M12.7 4 V10" stroke="#555" stroke-width="1.1"/></svg>
<svg class="b" style="left:13px;top:128.0px;" width="16" height="16" viewBox="0 0 16 16"><g fill="none" stroke="#555" stroke-width="1"><circle cx="8" cy="8" r="5.6"/><path d="M8 3.6 V12.4 M3.6 8 H12.4"/><path d="M6.6 5 L8 3.4 L9.4 5 M6.6 11 L8 12.6 L9.4 11 M5 6.6 L3.4 8 L5 9.4 M11 6.6 L12.6 8 L11 9.4"/></g><path d="M12.8 0.8 L15.4 0.6 L15.2 3.2 Z M0.6 12.8 L0.6 15.4 L3.2 15.4 Z" fill="#555"/></svg>
<div class="b" style="left:400px;top:9.0px;width:16px;height:1.0px;background:#3c4452;"></div>
<div class="b" style="left:400px;top:11.5px;width:16px;height:1.0px;background:#3c4452;"></div>
<svg class="b" style="left:418px;top:11.5px;" width="75" height="72" viewBox="0 0 75 72"><defs>
<linearGradient id="gg" x1="0" x2="1"><stop offset="0" stop-color="#7fd94a"/><stop offset="0.5" stop-color="#a4f56a"/><stop offset="1" stop-color="#78c846"/></linearGradient>
<linearGradient id="gr" y1="0" y2="1" x1="0" x2="0"><stop offset="0" stop-color="#e0584a"/><stop offset="0.5" stop-color="#f07060"/><stop offset="1" stop-color="#c84a40"/></linearGradient>
<linearGradient id="gw" y1="0" y2="1" x1="0" x2="0"><stop offset="0" stop-color="#c4c8d0"/><stop offset="0.5" stop-color="#e4e6ea"/><stop offset="1" stop-color="#b8bcc4"/></linearGradient>
<linearGradient id="gw2" x1="0" x2="1"><stop offset="0" stop-color="#c4c8d0"/><stop offset="0.5" stop-color="#e0e2e6"/><stop offset="1" stop-color="#b8bcc4"/></linearGradient>
</defs>
<path d="M27.9 13 Q34 10.5 40 13 L34.6 30 L33.4 30 Z" fill="url(#gg)"/>
<path d="M43.4 40.6 L61.5 34.8 Q64 40 61.5 45.2 L43.4 39.4 Z" fill="url(#gr)"/>
<path d="M25 40.6 L5.5 34.8 Q3.6 40 5.5 45.2 L25 39.4 Z" fill="url(#gw)"/>
<path d="M33.4 50 L28.2 67.4 Q34 70 39.9 67.4 L34.6 50 Z" fill="url(#gw2)"/>
<rect x="27" y="33.2" width="14" height="14" fill="#f6f6ff"/>
<text x="30" y="10.2" font-size="10.5" font-weight="bold" font-family="Liberation Sans, sans-serif" fill="#fff">y</text>
<text x="64.2" y="43" font-size="10" font-weight="bold" font-family="Liberation Sans, sans-serif" fill="#fff">x</text>
</svg>
<svg class="b" style="left:480px;top:15.5px;" width="9" height="9" viewBox="0 0 9 9"><rect x="0.5" y="3.8" width="7.6" height="5" fill="#eef0f6"/><path d="M2 4 V2.6 a2.3 2.3 0 0 1 4.6 0 V3" fill="none" stroke="#eef0f6" stroke-width="1.2"/></svg>
<svg class="b" style="left:429px;top:98.0px;" width="10" height="10" viewBox="0 0 10 10"><path d="M9.5 0.8 L0.8 5 L9.5 9.2 M0.8 5 H9.5" fill="none" stroke="#c5cfe2" stroke-width="1"/></svg>
<span class="t" style="left:441.9px;top:95.0px;font-size:12.5px;color:#c5cfe2;letter-spacing:-0.06px;">Back</span>
</div>
<div class="b" style="left:721px;top:49px;width:424px;height:568px;background:#c8c8c8;"></div>
<div class="b" style="left:721px;top:49px;width:424px;height:19px;background:#a5a5a5;border-radius:3px 0 0 0;"></div>
<div class="b" style="left:721px;top:50px;width:93px;height:18px;background:#c8c8c8;border-radius:3px 3px 0 0;"></div>
<svg class="b" style="left:730px;top:54.5px;" width="10" height="10" viewBox="0 0 10 10"><circle cx="5" cy="5" r="4.8" fill="#444"/><rect x="4.2" y="4.2" width="1.6" height="3.8" fill="#c8c8c8"/><rect x="4.2" y="2" width="1.6" height="1.5" fill="#c8c8c8"/></svg>
<span class="t" style="left:744.5px;top:52.0px;font-size:12px;color:#090909;letter-spacing:0.31px;">Inspector</span>
<svg class="b" style="left:1108.5px;top:53px;" width="8" height="10" viewBox="0 0 8 10"><g fill="none" stroke="#4a4a4a" stroke-width="1"><rect x="0.5" y="5.3" width="7" height="4"/><path d="M1.8 5.3 V3 a2.2 2.2 0 0 1 4.4 0 V3.4"/></g></svg>
<svg class="b" style="left:1128.5px;top:53.5px;" width="3" height="11" viewBox="0 0 3 11"><g fill="#4a4a4a"><rect x="0.5" y="0" width="2" height="2"/><rect x="0.5" y="4" width="2" height="2"/><rect x="0.5" y="8" width="2" height="2"/></g></svg>
<div class="b" style="left:1131px;top:68px;width:14px;height:549px;background:#c2c2c2;border-left:1px solid #b0b0b0;"></div>
<div class="b" style="left:1133.5px;top:84.5px;width:9.0px;height:507.5px;background:#9a9a9a;border-radius:4.5px;"></div>
<svg class="b" style="left:1134.5px;top:74px;" width="7.5" height="4" viewBox="0 0 7.5 4"><path d="M0 4 L3.75 0 L7.5 4 Z" fill="#555"/></svg>
<svg class="b" style="left:1134.5px;top:607px;" width="7.5" height="4.5" viewBox="0 0 7.5 4.5"><path d="M0 0 L3.75 4.5 L7.5 0 Z" fill="#555"/></svg>
<svg class="b" style="left:727.5px;top:78.5px;" width="21" height="21" viewBox="0 0 13 13"><g fill="none" stroke="#555" stroke-width="0.9" stroke-linejoin="round"><path d="M6.5 0.6 L12.3 3.6 L12.3 9.7 L6.5 12.5 L0.7 9.7 L0.7 3.6 Z"/><path d="M0.7 3.6 L6.5 6.7 L12.3 3.6 M6.5 6.7 L6.5 12.5"/></g></svg>
<svg class="b" style="left:748px;top:100px;" width="6" height="3.5" viewBox="0 0 6 3.5"><path d="M0 0 L6 0 L3.0 3.5 Z" fill="#4a4a4a"/></svg>
<div class="b" style="left:768.5px;top:79.5px;width:13.0px;height:13.0px;background:#f0f0f0;border:1px solid #9a9a9a;border-radius:2px;"></div>
<svg class="b" style="left:770.5px;top:81.5px;" width="9" height="9" viewBox="0 0 9 9"><path d="M1.2 4.6 L3.6 7 L8 2" fill="none" stroke="#222" stroke-width="1.2"/></svg>
<div class="b" style="left:788px;top:77.5px;width:262.5px;height:17.5px;background:#f0f0f0;border:1px solid #b2b2b2;border-radius:3px;"></div>
<span class="t" style="left:791.0px;top:78.5px;font-size:12px;color:#090909;letter-spacing:-0.00px;font-weight:bold;">Canvas</span>
<div class="b" style="left:1054.5px;top:79.5px;width:13.0px;height:13.0px;background:#f0f0f0;border:1px solid #9a9a9a;border-radius:2px;"></div>
<span class="t" style="left:1072.1px;top:78.5px;font-size:12px;color:#090909;letter-spacing:0.25px;">Static</span>
<svg class="b" style="left:1117px;top:84.5px;" width="8" height="5" viewBox="0 0 8 5"><path d="M0 0 L8 0 L4.0 5 Z" fill="#4a4a4a"/></svg>
<span class="t" style="left:761.2px;top:102.0px;font-size:12px;color:#090909;letter-spacing:0.78px;">Tag</span>
<div class="b" style="left:787.5px;top:101px;width:150.0px;height:17.5px;background:#dfdfdf;border:1px solid #b0b0b0;border-radius:3px;"></div>
<span class="t" style="left:791.0px;top:101.5px;font-size:12px;color:#090909;letter-spacing:0.33px;">Untagged</span>
<svg class="b" style="left:924px;top:108px;" width="8" height="5" viewBox="0 0 8 5"><path d="M0 0 L8 0 L4.0 5 Z" fill="#4a4a4a"/></svg>
<span class="t" style="left:949.7px;top:102.0px;font-size:12px;color:#090909;letter-spacing:0.37px;">Layer</span>
<div class="b" style="left:986.5px;top:101px;width:140.0px;height:17.5px;background:#dfdfdf;border:1px solid #b0b0b0;border-radius:3px;"></div>
<span class="t" style="left:990.1px;top:101.5px;font-size:12px;color:#090909;letter-spacing:-0.40px;">UI</span>
<svg class="b" style="left:1111.5px;top:108px;" width="8" height="5" viewBox="0 0 8 5"><path d="M0 0 L8 0 L4.0 5 Z" fill="#4a4a4a"/></svg>
<div class="b" style="left:721px;top:127px;width:410px;height:1px;background:#9c9c9c;"></div>
<div class="b" style="left:721px;top:128px;width:410px;height:20px;background:#cbcbcb;"></div>
<svg class="b" style="left:727.5px;top:135.0px;" width="8.5" height="7.5" viewBox="0 0 8.5 7.5"><path d="M0 0 L8.5 0 L4.25 7.5 Z" fill="#6b6b6b"/></svg>
<svg class="b" style="left:743px;top:132.5px;" width="12" height="12" viewBox="0 0 12 12"><g fill="#4a4a4a"><path d="M5.2 5.2 L1.6 4.4 L4.4 1.6 Z M6.8 5.2 L10.4 4.4 L7.6 1.6 Z M5.2 6.8 L1.6 7.6 L4.4 10.4 Z M6.8 6.8 L10.4 7.6 L7.6 10.4 Z"/></g><path d="M0.4 0.4 L3.4 3.4 M11.6 0.4 L8.6 3.4 M0.4 11.6 L3.4 8.6 M11.6 11.6 L8.6 8.6" stroke="#4a4a4a" stroke-width="1.3"/></svg>
<span class="t" style="left:781.2px;top:130.5px;font-size:12px;color:#090909;letter-spacing:0.20px;font-weight:bold;">Rect Transform</span>
<svg class="b" style="left:1073px;top:133.0px;" width="11" height="11" viewBox="0 0 11 11"><circle cx="5.5" cy="5.5" r="5.3" fill="#4a4a4a"/><text x="5.5" y="8.6" font-size="8.5" font-weight="bold" text-anchor="middle" fill="#c8c8c8" font-family="Liberation Sans, sans-serif">?</text></svg>
<svg class="b" style="left:1093px;top:133.5px;" width="11" height="10" viewBox="0 0 11 10"><path d="M0 2.5 H11 M0 7.5 H11" stroke="#4a4a4a" stroke-width="1.1"/><path d="M7.5 0 V5 M3.5 5 V10" stroke="#4a4a4a" stroke-width="1.4"/></svg>
<svg class="b" style="left:1116.5px;top:133.5px;" width="3" height="11" viewBox="0 0 3 11"><g fill="#4a4a4a"><rect x="0.5" y="0" width="2" height="2"/><rect x="0.5" y="4" width="2" height="2"/><rect x="0.5" y="8" width="2" height="2"/></g></svg>
<div class="b" style="left:721px;top:148px;width:410px;height:1px;background:#bdbdbd;"></div>
<div class="b" style="left:739px;top:153.5px;width:387.5px;height:17.0px;background:#d2d2d2;border:1px solid #a6a6a6;border-radius:3px;"></div>
<span class="t" style="left:742.8px;top:154.8px;font-size:10px;color:#161616;letter-spacing:0.33px;">Some values driven by Canvas.</span>
<span class="t" style="left:883.2px;top:177.0px;font-size:12px;color:#6a6a6a;letter-spacing:-0.34px;">Pos X</span>
<span class="t" style="left:965.9px;top:177.0px;font-size:12px;color:#6a6a6a;letter-spacing:-0.27px;">Pos Y</span>
<span class="t" style="left:1048.2px;top:177.0px;font-size:12px;color:#6a6a6a;letter-spacing:-0.12px;">Pos Z</span>
<div class="b" style="left:882.5px;top:194px;width:78.5px;height:16px;background:#dcdcdc;border:1px solid #cbcbcb;border-radius:3px;"></div>
<span class="t" style="left:885.0px;top:194.5px;font-size:12px;color:#707070;letter-spacing:0.48px;">400</span>
<div class="b" style="left:965.5px;top:194px;width:78.5px;height:16px;background:#dcdcdc;border:1px solid #cbcbcb;border-radius:3px;"></div>
<span class="t" style="left:968.0px;top:194.5px;font-size:12px;color:#707070;letter-spacing:0.48px;">400</span>
<div class="b" style="left:1047.5px;top:194px;width:79.0px;height:16px;background:#dcdcdc;border:1px solid #cbcbcb;border-radius:3px;"></div>
<span class="t" style="left:1050.0px;top:194.5px;font-size:12px;color:#707070;letter-spacing:0.40px;">0</span>
<span class="t" style="left:883.2px;top:213.0px;font-size:12px;color:#6a6a6a;letter-spacing:0.25px;">Width</span>
<span class="t" style="left:965.9px;top:213.0px;font-size:12px;color:#6a6a6a;letter-spacing:0.26px;">Height</span>
<div class="b" style="left:882.5px;top:230px;width:78.5px;height:16px;background:#dcdcdc;border:1px solid #cbcbcb;border-radius:3px;"></div>
<span class="t" style="left:885.0px;top:230.5px;font-size:12px;color:#707070;letter-spacing:0.48px;">800</span>
<div class="b" style="left:965.5px;top:230px;width:78.5px;height:16px;background:#dcdcdc;border:1px solid #cbcbcb;border-radius:3px;"></div>
<span class="t" style="left:968.0px;top:230.5px;font-size:12px;color:#707070;letter-spacing:0.48px;">800</span>
<div class="b" style="left:1076px;top:227.5px;width:50.5px;height:19.0px;background:#e4e4e4;border:1px solid #9e9e9e;border-radius:3px;"></div>
<div class="b" style="left:1099px;top:228.5px;width:1px;height:17.0px;background:#9e9e9e;"></div>
<svg class="b" style="left:1082.5px;top:231.5px;" width="11" height="11" viewBox="0 0 11 11"><rect x="0.7" y="0.7" width="9.6" height="9.6" fill="none" stroke="#222" stroke-width="1.2" stroke-dasharray="2.4 1.2"/></svg>
<span class="t" style="left:1109.0px;top:229.5px;font-size:11px;color:#222;letter-spacing:-0.95px;">R</span>
<svg class="b" style="left:729px;top:254.5px;" width="7" height="9" viewBox="0 0 7 9"><path d="M0 0 L7 4.5 L0 9 Z" fill="#6b6b6b"/></svg>
<span class="t" style="left:740.3px;top:251.0px;font-size:12px;color:#090909;letter-spacing:0.18px;">Anchors</span>
<span class="t" style="left:740.3px;top:271.0px;font-size:12px;color:#090909;letter-spacing:0.45px;">Pivot</span>
<span class="t" style="left:883.2px;top:271.0px;font-size:12px;color:#6a6a6a;letter-spacing:-1.22px;">X</span>
<div class="b" style="left:894.5px;top:270.5px;width:66.5px;height:16.0px;background:#dcdcdc;border:1px solid #cbcbcb;border-radius:3px;"></div>
<span class="t" style="left:897.0px;top:271.0px;font-size:12px;color:#707070;letter-spacing:0.40px;">0.5</span>
<span class="t" style="left:966.2px;top:271.0px;font-size:12px;color:#6a6a6a;letter-spacing:-1.72px;">Y</span>
<div class="b" style="left:977.5px;top:270.5px;width:66.5px;height:16.0px;background:#dcdcdc;border:1px solid #cbcbcb;border-radius:3px;"></div>
<span class="t" style="left:980.0px;top:271.0px;font-size:12px;color:#707070;letter-spacing:0.40px;">0.5</span>
<span class="t" style="left:740.3px;top:299.0px;font-size:12px;color:#090909;letter-spacing:0.36px;">Rotation</span>
<span class="t" style="left:885.9px;top:299.0px;font-size:12px;color:#6a6a6a;letter-spacing:-1.22px;">X</span>
<div class="b" style="left:900.5px;top:298.5px;width:61.5px;height:16.0px;background:#dcdcdc;border:1px solid #cbcbcb;border-radius:3px;"></div>
<span class="t" style="left:903.0px;top:299.0px;font-size:12px;color:#707070;letter-spacing:0.40px;">0</span>
<span class="t" style="left:968.2px;top:299.0px;font-size:12px;color:#6a6a6a;letter-spacing:-1.72px;">Y</span>
<div class="b" style="left:982.5px;top:298.5px;width:61.5px;height:16.0px;background:#dcdcdc;border:1px solid #cbcbcb;border-radius:3px;"></div>
<span class="t" style="left:985.0px;top:299.0px;font-size:12px;color:#707070;letter-spacing:0.40px;">0</span>
<span class="t" style="left:1049.7px;top:299.0px;font-size:12px;color:#6a6a6a;letter-spacing:-0.14px;">Z</span>
<div class="b" style="left:1064.5px;top:298.5px;width:62.0px;height:16.0px;background:#dcdcdc;border:1px solid #cbcbcb;border-radius:3px;"></div>
<span class="t" style="left:1067.0px;top:299.0px;font-size:12px;color:#707070;letter-spacing:0.40px;">0</span>
<span class="t" style="left:740.3px;top:318.5px;font-size:12px;color:#090909;letter-spacing:0.40px;">Scale</span>
<span class="t" style="left:885.9px;top:318.5px;font-size:12px;color:#6a6a6a;letter-spacing:-1.22px;">X</span>
<div class="b" style="left:900.5px;top:318.0px;width:61.5px;height:16.0px;background:#dcdcdc;border:1px solid #cbcbcb;border-radius:3px;"></div>
<span class="t" style="left:903.0px;top:318.5px;font-size:12px;color:#707070;letter-spacing:0.40px;">1</span>
<span class="t" style="left:968.2px;top:318.5px;font-size:12px;color:#6a6a6a;letter-spacing:-1.72px;">Y</span>
<div class="b" style="left:982.5px;top:318.0px;width:61.5px;height:16.0px;background:#dcdcdc;border:1px solid #cbcbcb;border-radius:3px;"></div>
<span class="t" style="left:985.0px;top:318.5px;font-size:12px;color:#707070;letter-spacing:0.40px;">1</span>
<span class="t" style="left:1049.7px;top:318.5px;font-size:12px;color:#6a6a6a;letter-spacing:-0.14px;">Z</span>
<div class="b" style="left:1064.5px;top:318.0px;width:62.0px;height:16.0px;background:#dcdcdc;border:1px solid #cbcbcb;border-radius:3px;"></div>
<span class="t" style="left:1067.0px;top:318.5px;font-size:12px;color:#707070;letter-spacing:0.40px;">1</span>
<div class="b" style="left:721px;top:344px;width:410px;height:1px;background:#9c9c9c;"></div>
<div class="b" style="left:721px;top:345px;width:410px;height:21px;background:#cbcbcb;"></div>
<svg class="b" style="left:728.7px;top:351.5px;" width="7" height="9" viewBox="0 0 7 9"><path d="M0 0 L7 4.5 L0 9 Z" fill="#6b6b6b"/></svg>
<svg class="b" style="left:742px;top:349.0px;" width="14" height="14" viewBox="0 0 14 14"><rect x="1.5" y="2.5" width="11" height="9" fill="#6a6a6a" stroke="#444" stroke-width="1"/><rect x="3.5" y="4.5" width="7" height="5" fill="#555"/><g fill="#444"><rect x="0" y="1" width="2.4" height="2.4"/><rect x="11.6" y="1" width="2.4" height="2.4"/><rect x="0" y="10.6" width="2.4" height="2.4"/><rect x="11.6" y="10.6" width="2.4" height="2.4"/></g></svg>
<div class="b" style="left:761.5px;top:349.5px;width:13.0px;height:13.0px;background:#f0f0f0;border:1px solid #9a9a9a;border-radius:2px;"></div>
<svg class="b" style="left:763.5px;top:351.5px;" width="9" height="9" viewBox="0 0 9 9"><path d="M1.2 4.6 L3.6 7 L8 2" fill="none" stroke="#222" stroke-width="1.2"/></svg>
<span class="t" style="left:781.2px;top:348.0px;font-size:12px;color:#090909;letter-spacing:-0.02px;font-weight:bold;">Canvas</span>
<svg class="b" style="left:1073px;top:350.5px;" width="11" height="11" viewBox="0 0 11 11"><circle cx="5.5" cy="5.5" r="5.3" fill="#4a4a4a"/><text x="5.5" y="8.6" font-size="8.5" font-weight="bold" text-anchor="middle" fill="#c8c8c8" font-family="Liberation Sans, sans-serif">?</text></svg>
<svg class="b" style="left:1093px;top:351.0px;" width="11" height="10" viewBox="0 0 11 10"><path d="M0 2.5 H11 M0 7.5 H11" stroke="#4a4a4a" stroke-width="1.1"/><path d="M7.5 0 V5 M3.5 5 V10" stroke="#4a4a4a" stroke-width="1.4"/></svg>
<svg class="b" style="left:1116.5px;top:351.0px;" width="3" height="11" viewBox="0 0 3 11"><g fill="#4a4a4a"><rect x="0.5" y="0" width="2" height="2"/><rect x="0.5" y="4" width="2" height="2"/><rect x="0.5" y="8" width="2" height="2"/></g></svg>
<div class="b" style="left:721px;top:366px;width:410px;height:1px;background:#9c9c9c;"></div>
<div class="b" style="left:721px;top:367px;width:410px;height:21px;background:#cbcbcb;"></div>
<svg class="b" style="left:728.7px;top:373.5px;" width="7" height="9" viewBox="0 0 7 9"><path d="M0 0 L7 4.5 L0 9 Z" fill="#6b6b6b"/></svg>
<svg class="b" style="left:742px;top:371.0px;" width="14" height="14" viewBox="0 0 14 14"><rect x="0.6" y="1.6" width="12.8" height="10.8" rx="1" fill="none" stroke="#444" stroke-width="1.2"/><rect x="2.6" y="3.6" width="7" height="6.8" fill="#444"/><path d="M11 3.6 h1.4 M11 6 h1.4" stroke="#444" stroke-width="1"/></svg>
<div class="b" style="left:761.5px;top:371.5px;width:13.0px;height:13.0px;background:#f0f0f0;border:1px solid #9a9a9a;border-radius:2px;"></div>
<svg class="b" style="left:763.5px;top:373.5px;" width="9" height="9" viewBox="0 0 9 9"><path d="M1.2 4.6 L3.6 7 L8 2" fill="none" stroke="#222" stroke-width="1.2"/></svg>
<span class="t" style="left:781.2px;top:370.0px;font-size:12px;color:#090909;letter-spacing:0.07px;font-weight:bold;">Canvas Scaler</span>
<svg class="b" style="left:1073px;top:372.5px;" width="11" height="11" viewBox="0 0 11 11"><circle cx="5.5" cy="5.5" r="5.3" fill="#4a4a4a"/><text x="5.5" y="8.6" font-size="8.5" font-weight="bold" text-anchor="middle" fill="#c8c8c8" font-family="Liberation Sans, sans-serif">?</text></svg>
<svg class="b" style="left:1093px;top:373.0px;" width="11" height="10" viewBox="0 0 11 10"><path d="M0 2.5 H11 M0 7.5 H11" stroke="#4a4a4a" stroke-width="1.1"/><path d="M7.5 0 V5 M3.5 5 V10" stroke="#4a4a4a" stroke-width="1.4"/></svg>
<svg class="b" style="left:1116.5px;top:373.0px;" width="3" height="11" viewBox="0 0 3 11"><g fill="#4a4a4a"><rect x="0.5" y="0" width="2" height="2"/><rect x="0.5" y="4" width="2" height="2"/><rect x="0.5" y="8" width="2" height="2"/></g></svg>
<div class="b" style="left:721px;top:388px;width:410px;height:1px;background:#9c9c9c;"></div>
<div class="b" style="left:721px;top:389px;width:410px;height:21px;background:#cbcbcb;"></div>
<svg class="b" style="left:728.7px;top:395.5px;" width="7" height="9" viewBox="0 0 7 9"><path d="M0 0 L7 4.5 L0 9 Z" fill="#6b6b6b"/></svg>
<svg class="b" style="left:742px;top:393.0px;" width="14" height="14" viewBox="0 0 14 14"><rect x="3.5" y="3.5" width="7" height="7" fill="none" stroke="#4a4a4a" stroke-width="1.3"/><path d="M0.5 0.5 L3.5 3.5 M10.5 10.5 L13.5 13.5" stroke="#3a6ad0" stroke-width="1.1"/><path d="M3.5 10.5 L2 12 M10.5 3.5 L12 2" stroke="#4a4a4a" stroke-width="1.1"/></svg>
<div class="b" style="left:761.5px;top:393.5px;width:13.0px;height:13.0px;background:#f0f0f0;border:1px solid #9a9a9a;border-radius:2px;"></div>
<svg class="b" style="left:763.5px;top:395.5px;" width="9" height="9" viewBox="0 0 9 9"><path d="M1.2 4.6 L3.6 7 L8 2" fill="none" stroke="#222" stroke-width="1.2"/></svg>
<span class="t" style="left:781.2px;top:392.0px;font-size:12px;color:#090909;letter-spacing:0.11px;font-weight:bold;">Graphic Raycaster</span>
<svg class="b" style="left:1073px;top:394.5px;" width="11" height="11" viewBox="0 0 11 11"><circle cx="5.5" cy="5.5" r="5.3" fill="#4a4a4a"/><text x="5.5" y="8.6" font-size="8.5" font-weight="bold" text-anchor="middle" fill="#c8c8c8" font-family="Liberation Sans, sans-serif">?</text></svg>
<svg class="b" style="left:1093px;top:395.0px;" width="11" height="10" viewBox="0 0 11 10"><path d="M0 2.5 H11 M0 7.5 H11" stroke="#4a4a4a" stroke-width="1.1"/><path d="M7.5 0 V5 M3.5 5 V10" stroke="#4a4a4a" stroke-width="1.4"/></svg>
<svg class="b" style="left:1116.5px;top:395.0px;" width="3" height="11" viewBox="0 0 3 11"><g fill="#4a4a4a"><rect x="0.5" y="0" width="2" height="2"/><rect x="0.5" y="4" width="2" height="2"/><rect x="0.5" y="8" width="2" height="2"/></g></svg>
<div class="b" style="left:721px;top:410px;width:410px;height:1px;background:#9c9c9c;"></div>
<div class="b" style="left:721px;top:411px;width:410px;height:21px;background:#cbcbcb;"></div>
<svg class="b" style="left:727.5px;top:418.5px;" width="8.5" height="7.5" viewBox="0 0 8.5 7.5"><path d="M0 0 L8.5 0 L4.25 7.5 Z" fill="#6b6b6b"/></svg>
<div class="b" style="left:743px;top:415.0px;width:12.5px;height:14.0px;background:#f8f8f8;border-radius:2px;box-shadow:0 0 0 0.5px #bbb;"></div>
<svg class="b" style="left:745.5px;top:417.5px;" width="8" height="9" viewBox="0 0 8 9"><path d="M2.9 0.5 L2.3 8.5 M5.7 0.5 L5.1 8.5 M0.6 3 H7.8 M0.2 6 H7.4" stroke="#2f9a3a" stroke-width="1" fill="none"/></svg>
<div class="b" style="left:761.5px;top:415.5px;width:13.0px;height:13.0px;background:#f0f0f0;border:1px solid #9a9a9a;border-radius:2px;"></div>
<svg class="b" style="left:763.5px;top:417.5px;" width="9" height="9" viewBox="0 0 9 9"><path d="M1.2 4.6 L3.6 7 L8 2" fill="none" stroke="#222" stroke-width="1.2"/></svg>
<span class="t" style="left:781.2px;top:414.0px;font-size:12px;color:#090909;letter-spacing:0.23px;font-weight:bold;">Trrain Canvas (Script)</span>
<svg class="b" style="left:1073px;top:416.5px;" width="11" height="11" viewBox="0 0 11 11"><circle cx="5.5" cy="5.5" r="5.3" fill="#4a4a4a"/><text x="5.5" y="8.6" font-size="8.5" font-weight="bold" text-anchor="middle" fill="#c8c8c8" font-family="Liberation Sans, sans-serif">?</text></svg>
<svg class="b" style="left:1093px;top:417.0px;" width="11" height="10" viewBox="0 0 11 10"><path d="M0 2.5 H11 M0 7.5 H11" stroke="#4a4a4a" stroke-width="1.1"/><path d="M7.5 0 V5 M3.5 5 V10" stroke="#4a4a4a" stroke-width="1.4"/></svg>
<svg class="b" style="left:1116.5px;top:417.0px;" width="3" height="11" viewBox="0 0 3 11"><g fill="#4a4a4a"><rect x="0.5" y="0" width="2" height="2"/><rect x="0.5" y="4" width="2" height="2"/><rect x="0.5" y="8" width="2" height="2"/></g></svg>
<span class="t" style="left:740.3px;top:437.1px;font-size:12px;color:#7a7a7a;letter-spacing:0.24px;">Script</span>
<div class="b" style="left:892px;top:435.5px;width:234.5px;height:16.5px;background:#d8d8d8;border:1px solid #bcbcbc;border-radius:3px;"></div>
<div class="b" style="left:896.5px;top:439.6px;width:9.0px;height:11.0px;background:#ececec;border-radius:1.5px;box-shadow:0 0 0 0.5px #c4c4c4;"></div>
<svg class="b" style="left:898.5px;top:442.1px;" width="5" height="6" viewBox="0 0 5 6"><path d="M1.8 0.3 L1.4 5.7 M3.8 0.3 L3.4 5.7 M0.2 2 H4.8 M0.1 4 H4.7" stroke="#8fc596" stroke-width="0.8" fill="none"/></svg>
<span class="t" style="left:909.5px;top:437.1px;font-size:12px;color:#8c8c8c;letter-spacing:0.23px;">TrrainCanvas</span>
<div class="b" style="left:1108px;top:437px;width:17.5px;height:14px;background:#d4d4d4;border-radius:0 2px 2px 0;"></div>
<svg class="b" style="left:1112px;top:439.5px;" width="10" height="10" viewBox="0 0 10 10"><circle cx="5" cy="5" r="4.2" fill="none" stroke="#8c8c8c" stroke-width="1"/><circle cx="5" cy="5" r="1.5" fill="#8c8c8c"/></svg>
<span class="t" style="left:740.3px;top:457.1px;font-size:12px;color:#090909;letter-spacing:0.07px;">Raw Image</span>
<div class="b" style="left:892px;top:455.5px;width:234.5px;height:16.5px;background:#f0f0f0;border:1px solid #b2b2b2;border-radius:3px;"></div>
<svg class="b" style="left:895.5px;top:460.1px;" width="11" height="10" viewBox="0 0 11 10"><rect x="0.6" y="0.6" width="9.8" height="8.8" fill="none" stroke="#444" stroke-width="1.1"/><path d="M1 8.6 L4 4.6 L6 7 L7.6 5.6 L10 8.6 Z" fill="#444"/><circle cx="7.4" cy="3" r="1" fill="#444"/></svg>
<span class="t" style="left:909.5px;top:457.1px;font-size:12px;color:#090909;letter-spacing:0.11px;">RawImage (Raw Image)</span>
<div class="b" style="left:1108px;top:457px;width:17.5px;height:14px;background:#dcdcdc;border-radius:0 2px 2px 0;"></div>
<svg class="b" style="left:1112px;top:459.5px;" width="10" height="10" viewBox="0 0 10 10"><circle cx="5" cy="5" r="4.2" fill="none" stroke="#3c3c3c" stroke-width="1"/><circle cx="5" cy="5" r="1.5" fill="#3c3c3c"/></svg>
<span class="t" style="left:740.3px;top:477.1px;font-size:12px;color:#090909;letter-spacing:0.23px;">Width</span>
<div class="b" style="left:892px;top:475.5px;width:234.5px;height:16.5px;background:#f0f0f0;border:1px solid #b2b2b2;border-radius:3px;"></div>
<span class="t" style="left:896.0px;top:477.1px;font-size:12px;color:#090909;letter-spacing:0.53px;">28</span>
<span class="t" style="left:740.3px;top:497.1px;font-size:12px;color:#090909;letter-spacing:0.28px;">Height</span>
<div class="b" style="left:892px;top:495.5px;width:234.5px;height:16.5px;background:#f0f0f0;border:1px solid #b2b2b2;border-radius:3px;"></div>
<span class="t" style="left:896.0px;top:497.1px;font-size:12px;color:#090909;letter-spacing:0.53px;">28</span>
<span class="t" style="left:740.3px;top:517.1px;font-size:12px;color:#090909;letter-spacing:0.27px;">Input Idx Img</span>
<div class="b" style="left:892px;top:515.5px;width:234.5px;height:16.5px;background:#f0f0f0;border:1px solid #b2b2b2;border-radius:3px;"></div>
<div class="b" style="left:895.5px;top:519.1px;width:12.0px;height:12.0px;background:#f4fbff;border:1px solid #1c9ad6;border-radius:1.5px;"></div>
<svg class="b" style="left:895.5px;top:519.1px;" width="12" height="12" viewBox="0 0 12 12"><text x="6" y="10" font-size="11" font-weight="bold" text-anchor="middle" fill="#1c9ad6" font-family="Liberation Serif, serif">I</text></svg>
<span class="t" style="left:909.5px;top:517.1px;font-size:12px;color:#090909;letter-spacing:0.22px;">inputIdxImg (TMP_Input Field)</span>
<div class="b" style="left:1108px;top:517px;width:17.5px;height:14px;background:#dcdcdc;border-radius:0 2px 2px 0;"></div>
<svg class="b" style="left:1112px;top:519.5px;" width="10" height="10" viewBox="0 0 10 10"><circle cx="5" cy="5" r="4.2" fill="none" stroke="#3c3c3c" stroke-width="1"/><circle cx="5" cy="5" r="1.5" fill="#3c3c3c"/></svg>
<span class="t" style="left:740.3px;top:537.1px;font-size:12px;color:#090909;letter-spacing:0.64px;">Text Target</span>
<div class="b" style="left:892px;top:535.5px;width:234.5px;height:16.5px;background:#f0f0f0;border:1px solid #b2b2b2;border-radius:3px;"></div>
<div class="b" style="left:895.5px;top:539.1px;width:12.0px;height:12.0px;background:#f4fbff;border:1px solid #1c9ad6;border-radius:1.5px;"></div>
<svg class="b" style="left:895.5px;top:539.1px;" width="12" height="12" viewBox="0 0 12 12"><text x="6" y="10" font-size="11" font-weight="bold" text-anchor="middle" fill="#1c9ad6" font-family="Liberation Serif, serif">T</text></svg>
<span class="t" style="left:909.5px;top:537.1px;font-size:12px;color:#090909;letter-spacing:0.39px;">textTarget (Text Mesh Pro UGUI)</span>
<div class="b" style="left:1108px;top:537px;width:17.5px;height:14px;background:#dcdcdc;border-radius:0 2px 2px 0;"></div>
<svg class="b" style="left:1112px;top:539.5px;" width="10" height="10" viewBox="0 0 10 10"><circle cx="5" cy="5" r="4.2" fill="none" stroke="#3c3c3c" stroke-width="1"/><circle cx="5" cy="5" r="1.5" fill="#3c3c3c"/></svg>
<span class="t" style="left:740.3px;top:557.1px;font-size:12px;color:#090909;letter-spacing:0.43px;">Text Predict</span>
<div class="b" style="left:892px;top:555.5px;width:234.5px;height:16.5px;background:#f0f0f0;border:1px solid #b2b2b2;border-radius:3px;"></div>
<div class="b" style="left:895.5px;top:559.1px;width:12.0px;height:12.0px;background:#f4fbff;border:1px solid #1c9ad6;border-radius:1.5px;"></div>
<svg class="b" style="left:895.5px;top:559.1px;" width="12" height="12" viewBox="0 0 12 12"><text x="6" y="10" font-size="11" font-weight="bold" text-anchor="middle" fill="#1c9ad6" font-family="Liberation Serif, serif">T</text></svg>
<span class="t" style="left:909.5px;top:557.1px;font-size:12px;color:#090909;letter-spacing:0.35px;">textPredict (Text Mesh Pro UGUI)</span>
<div class="b" style="left:1108px;top:557px;width:17.5px;height:14px;background:#dcdcdc;border-radius:0 2px 2px 0;"></div>
<svg class="b" style="left:1112px;top:559.5px;" width="10" height="10" viewBox="0 0 10 10"><circle cx="5" cy="5" r="4.2" fill="none" stroke="#3c3c3c" stroke-width="1"/><circle cx="5" cy="5" r="1.5" fill="#3c3c3c"/></svg>
<div class="b" style="left:721px;top:581px;width:410px;height:1px;background:#9c9c9c;"></div>
<div class="b" style="left:812px;top:591px;width:228.5px;height:22px;background:#e4e4e4;border:1px solid #a2a2a2;border-radius:3px;"></div>
<span class="t" style="left:881.0px;top:593.5px;font-size:12px;color:#090909;letter-spacing:0.25px;">Add Component</span>
<div class="b" style="left:0px;top:616.5px;width:1145px;height:1.5px;background:#8b8b8b;"></div>
<div class="b" style="left:0px;top:19px;width:1px;height:598px;background:#c4c4c4;"></div>
<div class="b" style="left:1144px;top:0px;width:1px;height:58px;background:#5a5a5a;"></div>
<div class="b" style="left:0px;top:616px;width:1145px;height:1px;background:rgba(139,139,139,0.4);"></div>
</div>
</body></html>
